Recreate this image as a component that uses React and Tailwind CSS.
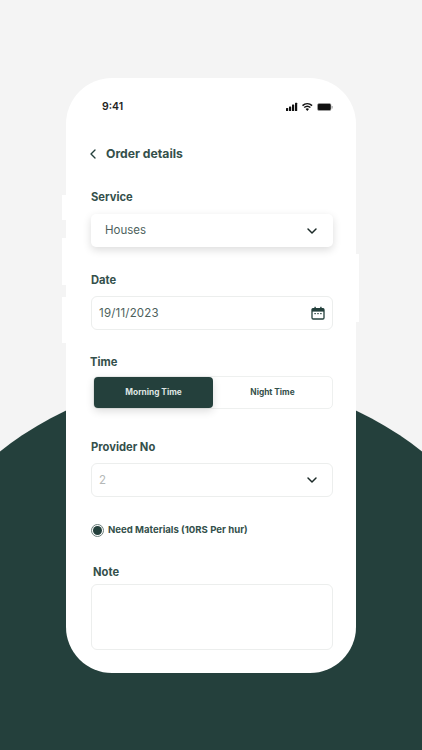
import { ChevronDown, ChevronLeft } from 'lucide-react'

function Nub({ className }) {
  return <div className={`absolute bg-white ${className}`} />
}

function Label({ children, className = '' }) {
  return <p className={`text-[11.2px] leading-[16px] font-bold text-[#34504b] ${className}`}>{children}</p>
}

function StatusIcons() {
  return (
    <svg width="47" height="10" viewBox="0 0 47 10" className="block">
      {/* signal */}
      <rect x="0" y="6" width="2.2" height="3" rx="0.5" fill="#111" />
      <rect x="3" y="4.5" width="2.2" height="4.5" rx="0.5" fill="#111" />
      <rect x="6" y="2.6" width="2.2" height="6.4" rx="0.5" fill="#111" />
      <rect x="9" y="0.8" width="2.2" height="8.2" rx="0.5" fill="#111" />
      {/* wifi */}
      <path d="M16.5 3.6a7.4 7.4 0 0 1 9.6 0" fill="none" stroke="#111" strokeWidth="1.5" />
      <path d="M18.2 5.5a4.8 4.8 0 0 1 6.2 0" fill="none" stroke="#111" strokeWidth="1.5" />
      <path d="M21.3 9l-1.7-2a2.6 2.6 0 0 1 3.4 0z" fill="#111" />
      {/* battery */}
      <rect x="31.5" y="1.5" width="13.5" height="7" rx="1.5" fill="#111" stroke="#aaa" strokeWidth="0.6" />
      <rect x="45.6" y="4" width="1" height="2.5" fill="#999" />
    </svg>
  )
}

function CalendarIcon() {
  return (
    <svg width="14" height="14" viewBox="0 0 14 14" fill="none">
      <rect x="1" y="2.6" width="12" height="10.4" rx="1.2" stroke="#24403c" strokeWidth="1.3" />
      <rect x="1" y="2.6" width="12" height="3" fill="#24403c" />
      <rect x="3.4" y="0.8" width="1.4" height="2.6" fill="#24403c" />
      <rect x="9.2" y="0.8" width="1.4" height="2.6" fill="#24403c" />
      <rect x="3.4" y="7" width="1.4" height="1.2" fill="#24403c" />
      <rect x="6.3" y="7" width="1.4" height="1.2" fill="#24403c" />
      <rect x="9.2" y="7" width="1.4" height="1.2" fill="#24403c" />
    </svg>
  )
}

export default function App() {
  return (
    <div className="relative w-[422px] h-[750px] overflow-hidden bg-[#f4f4f4] font-['Inter',sans-serif]">
      {/* big green circle behind the phone */}
      <div className="absolute left-[-129px] top-[378px] w-[680px] h-[680px] rounded-full bg-[#24403c]" />

      {/* side buttons */}
      <Nub className="left-[62px] top-[195px] w-[6px] h-[25px]" />
      <Nub className="left-[62px] top-[238px] w-[6px] h-[47px]" />
      <Nub className="left-[62px] top-[297px] w-[6px] h-[46px]" />
      <Nub className="left-[354px] top-[254px] w-[5px] h-[68px]" />

      <div className="relative mx-auto mt-[78px] w-[290px] h-[595px] rounded-[46px] bg-white pl-[25px] pr-[23px]">
        {/* status bar */}
        <div className="flex items-center justify-between pt-[22px] pl-[11px]">
          <span className="text-[10.5px] leading-[14px] font-semibold text-[#222]">9:41</span>
          <StatusIcons />
        </div>

        {/* header */}
        <div className="flex items-center mt-[31px] h-[18px]">
          <ChevronLeft className="w-[16px] h-[16px] text-[#24403c] ml-[-6px]" strokeWidth={2} />
          <h1 className="ml-[5px] text-[12.2px] leading-[18px] font-bold text-[#34504b]">Order details</h1>
        </div>

        <Label className="mt-[26px]">Service</Label>
        <div className="mt-[9px] flex items-center justify-between h-[33px] rounded-[5px] bg-white pl-[14px] pr-[13px] shadow-[0_3px_8px_rgba(0,0,0,0.14)]">
          <span className="pt-[1px] text-[11.5px] text-[#4d5f5c]">Houses</span>
          <ChevronDown className="w-[16px] h-[16px] text-[#1c2a28]" strokeWidth={2.2} />
        </div>

        <Label className="mt-[25px]">Date</Label>
        <div className="mt-[8px] flex items-center justify-between h-[34px] rounded-[6px] border border-[#eceeed] pl-[7px] pr-[7px]">
          <span className="pt-[1px] text-[11.5px] tracking-[0.2px] text-[#4d5f5c]">19/11/2023</span>
          <CalendarIcon />
        </div>

        <Label className="mt-[24px] ml-[-1px]">Time</Label>
        <div className="mt-[6px] ml-[2px] flex h-[33px] rounded-[5px] border border-[#eef0ef] text-[8.3px] font-bold">
          <div className="w-[119px] flex items-center justify-center rounded-[4px] bg-[#24403c] text-[#dfe5e3] shadow-[0_3px_8px_rgba(0,0,0,0.14)]">Morning Time</div>
          <div className="flex-1 flex items-center justify-center text-[#34504b]">Night Time</div>
        </div>

        <Label className="mt-[30px]">Provider No</Label>
        <div className="mt-[8px] flex items-center justify-between h-[34px] rounded-[6px] border border-[#eceeed] pl-[7px] pr-[12px]">
          <span className="pt-[1px] text-[11.5px] text-[#b4b8b7]">2</span>
          <ChevronDown className="w-[16px] h-[16px] text-[#1c2a28]" strokeWidth={2.2} />
        </div>

        <div className="mt-[26px] flex items-center h-[14px]">
          <span className="flex items-center justify-center w-[13px] h-[13px] rounded-full border border-[#6d7f7c]">
            <span className="w-[9px] h-[9px] rounded-full bg-[#24403c]" />
          </span>
          <span className="ml-[4px] text-[9.6px] font-bold text-[#34504b]">Need Materials (10RS Per hur)</span>
        </div>

        <Label className="mt-[27px] ml-[2px]">Note</Label>
        <div className="mt-[4px] h-[66px] rounded-[6px] border border-[#eceeed]" />
      </div>
    </div>
  )
}
